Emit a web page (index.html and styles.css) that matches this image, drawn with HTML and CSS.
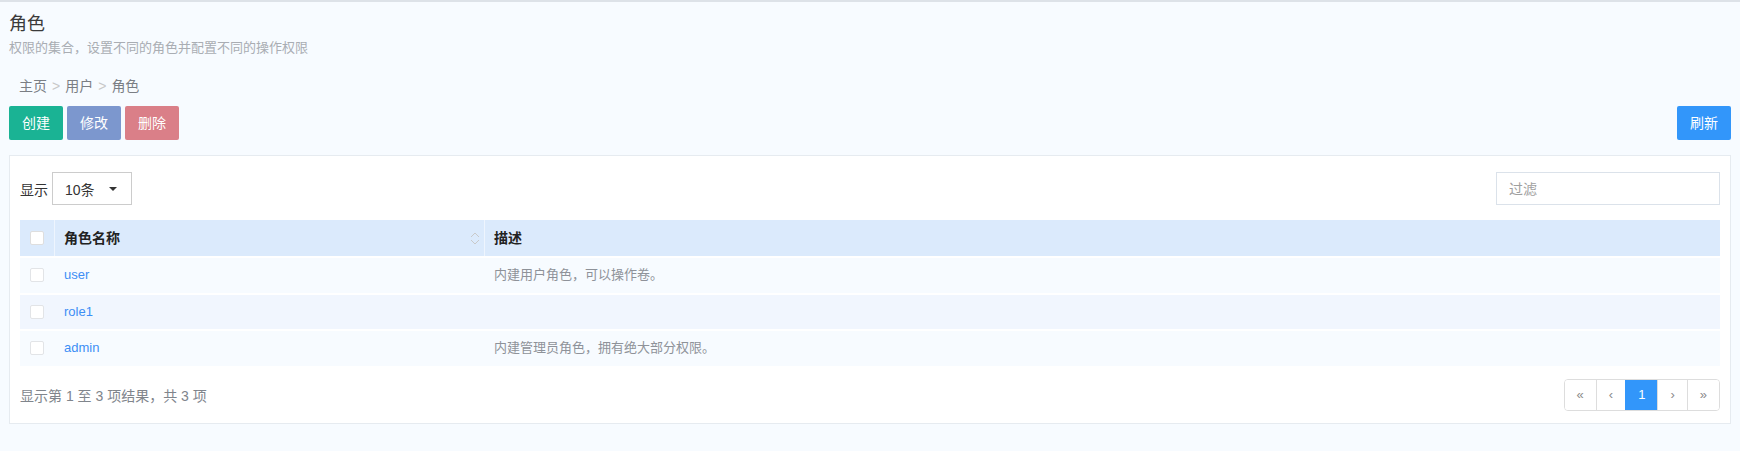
FILE: index.html
```html
<!DOCTYPE html>
<html lang="zh-CN">
<head>
<meta charset="utf-8">
<title>角色</title>
<link rel="stylesheet" href="styles.css">
</head>
<body>
<div class="topline"></div>
<div class="page">
  <div class="page-head">
    <h1 class="title">角色</h1>
    <p class="subtitle">权限的集合，设置不同的角色并配置不同的操作权限</p>
  </div>
  <ol class="breadcrumb">
    <li class="crumb">主页</li>
    <li class="sep">&gt;</li>
    <li class="crumb">用户</li>
    <li class="sep">&gt;</li>
    <li class="crumb">角色</li>
  </ol>
  <div class="toolbar">
    <div class="btn-group">
      <button class="btn btn-create">创建</button>
      <button class="btn btn-edit">修改</button>
      <button class="btn btn-delete">删除</button>
    </div>
    <button class="btn btn-refresh">刷新</button>
  </div>
  <div class="card">
    <div class="card-top">
      <div class="length">
        <span class="length-label">显示</span>
        <span class="select">10条<span class="caret"></span></span>
      </div>
      <input class="filter" type="text" placeholder="过滤">
    </div>
    <table class="grid">
      <colgroup>
        <col class="col-check">
        <col class="col-name">
        <col class="col-desc">
      </colgroup>
      <thead>
        <tr>
          <th class="cell-check"><span class="checkbox"></span></th>
          <th class="th-sort">
            <div class="th-inner">
              <span>角色名称</span>
              <svg class="sort-icon" width="10" height="13" viewBox="0 0 10 13" fill="none" stroke="#c9c9c9" stroke-width="1">
                <path d="M1 5 L5 1 L9 5"/>
                <path d="M1 8 L5 12 L9 8"/>
              </svg>
            </div>
          </th>
          <th>描述</th>
        </tr>
      </thead>
      <tbody>
        <tr class="row-odd">
          <td class="cell-check"><span class="checkbox light"></span></td>
          <td><a class="link" href="#">user</a></td>
          <td class="desc">内建用户角色，可以操作卷。</td>
        </tr>
        <tr class="row-even">
          <td class="cell-check"><span class="checkbox light"></span></td>
          <td><a class="link" href="#">role1</a></td>
          <td class="desc"></td>
        </tr>
        <tr class="row-odd">
          <td class="cell-check"><span class="checkbox light"></span></td>
          <td><a class="link" href="#">admin</a></td>
          <td class="desc">内建管理员角色，拥有绝大部分权限。</td>
        </tr>
      </tbody>
    </table>
    <div class="card-foot">
      <span class="info">显示第 1 至 3 项结果，共 3 项</span>
      <ul class="pager">
        <li class="page-btn">&laquo;</li>
        <li class="page-btn">&lsaquo;</li>
        <li class="page-btn active">1</li>
        <li class="page-btn">&rsaquo;</li>
        <li class="page-btn">&raquo;</li>
      </ul>
    </div>
  </div>
</div>
</body>
</html>
```

FILE: styles.css
```css
* {
  box-sizing: border-box;
}

html, body {
  margin: 0;
  padding: 0;
}

body {
  background: #f7fbff;
  font-family: "Liberation Sans", "Noto Sans CJK SC", sans-serif;
  font-size: 14px;
  color: #333;
  height: 451px;
  overflow: hidden;
}

.topline {
  height: 2px;
  background: #dde2e8;
}

.page {
  padding: 0 9px;
}

.title {
  margin: 10px 0 0;
  font-size: 18px;
  font-weight: normal;
  line-height: 24px;
  color: #3a3a3a;
}

.subtitle {
  margin: 2px 0 0;
  font-size: 13px;
  line-height: 19px;
  color: #a9adb3;
}

.breadcrumb {
  list-style: none;
  margin: 19px 0 0;
  padding: 0 0 0 10px;
  display: flex;
  line-height: 20px;
  font-size: 14px;
}

.crumb {
  color: #7a7e84;
}

.sep {
  color: #c8c8c8;
  padding: 0 5px;
}

.toolbar {
  margin-top: 10px;
  display: flex;
  justify-content: space-between;
  align-items: center;
}

.btn-group {
  display: flex;
  gap: 4px;
}

.btn {
  height: 34px;
  padding: 0 13px;
  border: none;
  border-radius: 2px;
  color: #fff;
  font-family: inherit;
  font-size: 14px;
  line-height: 34px;
}

.btn-create {
  background: #1ab394;
}

.btn-edit {
  background: #7c97ce;
}

.btn-delete {
  background: #da7f88;
}

.btn-refresh {
  background: #3296fa;
}

.card {
  margin-top: 15px;
  background: #fff;
  border: 1px solid #e6ebf0;
  padding: 16px 10px 12px;
}

.card-top {
  display: flex;
  justify-content: space-between;
  align-items: center;
  height: 33px;
}

.length {
  display: flex;
  align-items: center;
  gap: 4px;
}

.length-label {
  color: #333;
}

.select {
  width: 80px;
  height: 33px;
  border: 1px solid #cccccc;
  background: #fff;
  display: flex;
  align-items: center;
  justify-content: space-between;
  padding: 0 14px 0 12px;
  color: #333;
}

.caret {
  width: 0;
  height: 0;
  border-top: 4px solid #333;
  border-left: 4px solid transparent;
  border-right: 4px solid transparent;
}

.filter {
  width: 224px;
  height: 33px;
  border: 1px solid #dbe2ea;
  padding: 0 12px;
  font-family: inherit;
  font-size: 14px;
  color: #333;
  outline: none;
}

.filter::placeholder {
  color: #a0a0a0;
}

.grid {
  margin-top: 15px;
  width: 100%;
  table-layout: fixed;
  border-collapse: separate;
  border-spacing: 0;
}

.col-check {
  width: 34px;
}

.col-name {
  width: 430px;
}

.grid th {
  background: #dbeafc;
  height: 36px;
  padding: 0 9px;
  text-align: left;
  font-weight: bold;
  font-size: 14px;
  color: #222;
  line-height: 36px;
}

.grid th + th {
  border-left: 1px solid #eef5fe;
}

.grid td {
  border-top: 2px solid #fff;
  padding: 0 10px;
  line-height: 34.5px;
  font-size: 13px;
}

.grid .cell-check {
  padding: 0 0 0 10px;
  line-height: 0;
  vertical-align: middle;
}

.row-odd td {
  background: #f7fbff;
}

.row-even td {
  background: #f1f6fe;
}

.th-inner {
  display: flex;
  justify-content: space-between;
  align-items: center;
  margin-right: -5px;
}

.sort-icon {
  display: block;
}

.checkbox {
  display: inline-block;
  width: 14px;
  height: 14px;
  border: 1px solid #dedede;
  border-radius: 2px;
  background: #fff;
  vertical-align: middle;
}

.checkbox.light {
  border-color: #e2e4e7;
}

.link {
  color: #3d8ef5;
  text-decoration: none;
}

.desc {
  color: #8e9299;
}

.card-foot {
  margin-top: 13.5px;
  display: flex;
  justify-content: space-between;
  align-items: center;
  height: 32px;
}

.info {
  color: #80858c;
  font-size: 14px;
}

.pager {
  list-style: none;
  margin: 0;
  padding: 0;
  display: flex;
  border: 1px solid #dddddd;
  border-radius: 4px;
  height: 32px;
  overflow: hidden;
}

.page-btn {
  padding: 0 12px;
  line-height: 30px;
  font-size: 13px;
  color: #8b8b8b;
  background: #fff;
}

.page-btn + .page-btn {
  border-left: 1px solid #dddddd;
}

.page-btn.active {
  background: #3296fa;
  color: #fff;
  border-left-color: #3296fa;
}
```
